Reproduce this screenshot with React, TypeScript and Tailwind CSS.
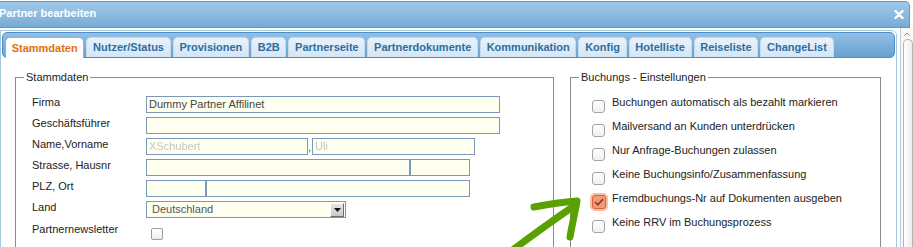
import React from "react";

const tabs = [
  "Stammdaten",
  "Nutzer/Status",
  "Provisionen",
  "B2B",
  "Partnerseite",
  "Partnerdokumente",
  "Kommunikation",
  "Konfig",
  "Hotelliste",
  "Reiseliste",
  "ChangeList",
];

const options: { label: string; checked?: boolean }[] = [
  { label: "Buchungen automatisch als bezahlt markieren" },
  { label: "Mailversand an Kunden unterdrücken" },
  { label: "Nur Anfrage-Buchungen zulassen" },
  { label: "Keine Buchungsinfo/Zusammenfassung" },
  { label: "Fremdbuchungs-Nr auf Dokumenten ausgeben", checked: true },
  { label: "Keine RRV im Buchungsprozess" },
];

const fieldCls =
  "h-[17px] border border-[#7b9abb] bg-[#fffff0] px-[2px] text-[11px] leading-[15px] text-[#444] whitespace-nowrap overflow-hidden shrink-0";

function Row({ label, children, className = "" }: { label: string; children?: React.ReactNode; className?: string }) {
  return (
    <div className={"flex h-[21px] items-start " + className}>
      <div className="w-[114px] shrink-0 leading-[13px] text-[11px] text-[#222]">{label}</div>
      <div className="flex items-start">{children}</div>
    </div>
  );
}

function Check({ checked }: { checked?: boolean }) {
  if (checked) {
    return (
      <div className="mt-[3px] flex h-[14px] w-[14px] shrink-0 items-center justify-center rounded-[3px] border border-[#d9623a] bg-[#f39a78] shadow-[0_0_0_2px_#f7bea6]">
        <svg width="10" height="8" viewBox="0 0 10 8">
          <path d="M1 4 L3.8 6.8 L9 1.2" fill="none" stroke="#7e4232" strokeWidth="1.7" />
        </svg>
      </div>
    );
  }
  return (
    <div className="mt-[4px] h-[13px] w-[13px] shrink-0 rounded-[3px] border border-[#a3a3a3] bg-gradient-to-b from-white to-[#f0f0f0]" />
  );
}

export default function App() {
  return (
    <div className="relative h-[247px] w-[913px] overflow-hidden bg-white font-['Liberation_Sans',Arial,sans-serif] text-[11px] text-[#222]">
      {/* Title bar */}
      <div className="mt-[1px] flex h-[27px] w-[910px] items-center justify-between rounded-tr-[5px] border border-l-0 border-[#5d98cc] bg-gradient-to-b from-[#9fc8e8] via-[#8cbbe0] to-[#76abd7] pr-[5px]">
        <span className="ml-[-1px] mt-[-2px] text-[11px] font-bold leading-[13px] text-white">Partner bearbeiten</span>
        <svg width="10" height="9" viewBox="0 0 10 9">
          <path d="M1.5 1 L8.5 8 M8.5 1 L1.5 8" stroke="white" strokeWidth="2.4" strokeLinecap="round" />
        </svg>
      </div>

      <div className="flex">
        {/* Panel */}
        <div className="mt-[2px] h-[260px] w-[897px] rounded-tr-[5px] border border-[#a6c9e2] p-[1px]">
          {/* Tab bar */}
          <div className="flex h-[26px] items-start gap-[2px] rounded-[5px] border border-[#4d8fca] bg-gradient-to-b from-[#93bfe3] to-[#68a1d0] pl-[2px] pt-[4px]">
            {tabs.map((t, i) =>
              i === 0 ? (
                <div
                  key={t}
                  className="mb-[-1px] h-[21px] rounded-t-[5px] border border-b-0 border-[#79b7e7] bg-white px-[5.7px] text-[11px] font-bold leading-[20px] text-[#e17009]"
                >
                  {t}
                </div>
              ) : (
                <div
                  key={t}
                  className="h-[20px] rounded-t-[5px] border border-b-0 border-[#c5dbec] bg-gradient-to-b from-[#e8f2fb] to-[#d4e6f5] px-[5.7px] text-[11px] font-bold leading-[19px] text-[#2e6e9e]"
                >
                  {t}
                </div>
              )
            )}
          </div>

          {/* Content */}
          <div className="flex pl-[13px] pt-[12px]">
            <fieldset className="m-0 h-[200px] w-[539px] min-w-0 border border-[#8a8a8a] p-0">
              <legend className="ml-[8px] px-[2px] text-[11px] leading-[14px] text-[#222]">Stammdaten</legend>
              <div className="pl-[16px] pt-[12px]">
                <Row label="Firma">
                  <div className={fieldCls + " w-[354px]"}>Dummy Partner Affilinet</div>
                </Row>
                <Row label="Geschäftsführer">
                  <div className={fieldCls + " w-[354px]"} />
                </Row>
                <Row label="Name,Vorname">
                  <div className={fieldCls + " w-[162px]"}>
                    <span className="text-[#c4c4c4] blur-[0.6px]">XSchubert</span>
                  </div>
                  <span className="w-[4px] text-[11px] leading-[19px] text-[#444]">,</span>
                  <div className={fieldCls + " w-[163px]"}>
                    <span className="text-[#c4c4c4] blur-[0.6px]">Uli</span>
                  </div>
                </Row>
                <Row label="Strasse, Hausnr">
                  <div className={fieldCls + " w-[264px]"} />
                  <div className={fieldCls + " w-[60px]"} />
                </Row>
                <Row label="PLZ, Ort">
                  <div className={fieldCls + " w-[60px]"} />
                  <div className={fieldCls + " w-[264px]"} />
                </Row>
                <Row label="Land">
                  <div className="flex h-[17px] w-[200px] items-center justify-between border border-[#7b9abb] bg-[#fffff0] pl-[5px] pr-[1px]">
                    <span className="text-[11px] leading-[15px] text-[#555]">Deutschland</span>
                    <div className="flex h-[14px] w-[14px] items-center justify-center border-b border-l border-r border-t border-b-[#6e6e6e] border-l-white border-r-[#6e6e6e] border-t-white bg-gradient-to-b from-[#e6e6e6] to-[#c9c9c9]">
                      <svg width="7" height="4" viewBox="0 0 7 4">
                        <path d="M0 0 L7 0 L3.5 4 Z" fill="#111" />
                      </svg>
                    </div>
                  </div>
                </Row>
                <Row label="Partnernewsletter" className="pt-[1px]">
                  <div className="ml-[5px] mt-[5px] h-[12px] w-[12px] rounded-[2px] border border-[#9e9e9e] bg-gradient-to-b from-white to-[#eeeeee]" />
                </Row>
              </div>
            </fieldset>

            <fieldset className="m-0 ml-[16px] h-[200px] w-[311px] min-w-0 border border-[#8a8a8a] p-0">
              <legend className="ml-[8px] px-[2px] text-[11px] leading-[14px] text-[#222]">Buchungs - Einstellungen</legend>
              <div className="pl-[21px] pt-[12px]">
                {options.map((o) => (
                  <div key={o.label} className="flex h-[24px] items-start">
                    <Check checked={o.checked} />
                    <span className={(o.checked ? "ml-[6px]" : "ml-[7px]") + " whitespace-nowrap text-[11px] leading-[13px] text-[#222]"}>{o.label}</span>
                  </div>
                ))}
              </div>
            </fieldset>
          </div>
        </div>

        {/* Scrollbar */}
        <div className="ml-[3px] flex h-[230px] w-[13px] flex-col border-l border-[#c3ccd6] bg-[#f8f8f8]">
          <div className="flex h-[11px] items-center justify-center">
            <svg width="6" height="4" viewBox="0 0 6 4">
              <path d="M0.5 3.5 L3 1 L5.5 3.5" fill="none" stroke="#888" strokeWidth="1" />
            </svg>
          </div>
          <div className="ml-[2px] w-[10px] flex-1 rounded-t-[5px] border border-b-0 border-[#b4b4b4] bg-gradient-to-r from-white to-[#ececec]" />
        </div>
      </div>

      {/* Green annotation arrow */}
      <svg className="pointer-events-none absolute left-0 top-0" width="913" height="247" viewBox="0 0 913 247">
        <g fill="none" stroke="#59a000" strokeWidth="7" strokeLinecap="round" strokeLinejoin="round">
          <path d="M510 252 C 530 237, 552 221, 574 206" />
          <path d="M534 207 C 549 204, 563 202, 577 201 C 575 213, 572 225, 570 237" />
        </g>
      </svg>
    </div>
  );
}
